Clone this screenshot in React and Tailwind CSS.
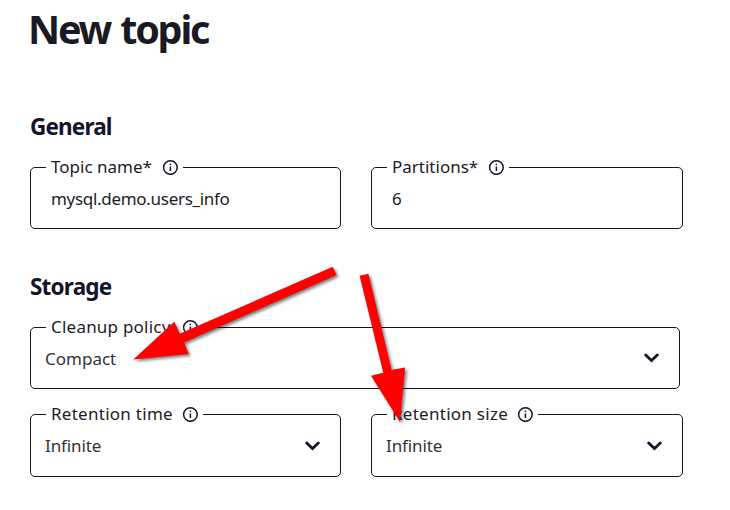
const INK = '#14142b';

function InfoIcon() {
  return (
    <svg className="block h-4 w-4 shrink-0" viewBox="0 0 16 16" fill="none">
      <circle cx="8.4" cy="8.5" r="6.8" stroke={INK} strokeWidth="1.5" />
      <path d="M8.4 7.5V12" stroke={INK} strokeWidth="1.5" />
      <path d="M8.4 4.6V6.2" stroke={INK} strokeWidth="1.5" />
    </svg>
  );
}

function Chevron() {
  return (
    <svg className="block h-[10px] w-4 shrink-0" viewBox="0 0 16 10" fill="none">
      <path d="M1.700 2L7.500 7.600L13.300 2" stroke={INK} strokeWidth="2.8" strokeLinecap="round" strokeLinejoin="miter" />
    </svg>
  );
}

function Field({ label, labelClass, value, valueClass, boxClass, select = false }) {
  return (
    <div className={`relative flex items-center rounded-[5px] border border-[#14142b] ${boxClass}`}>
      <div className="absolute -top-[13px] left-[15px] flex h-6 items-center bg-white pl-[5px] pr-[5px]">
        <span className={`block whitespace-nowrap text-[17px] leading-6 text-[#1c1c26] ${labelClass}`}>{label}</span>
        <InfoIcon />
      </div>
      <span className={`block flex-1 whitespace-nowrap text-[17px] leading-6 ${valueClass}`}>{value}</span>
      {select && <Chevron />}
    </div>
  );
}

export default function App() {
  return (
    <main className="relative h-[510px] w-[730px] overflow-hidden bg-white pl-[30px] font-['Noto_Sans','Open_Sans',sans-serif]">
      <h1 className="-ml-[2px] h-[58px] whitespace-nowrap text-[39.5px] leading-[58px] font-bold tracking-[-2.2px] text-[#1a1a24] [word-spacing:2px]">New topic</h1>

      <section className="mt-[55px]">
        <h2 className="h-7 text-[22.5px] leading-7 font-bold tracking-[-0.85px] text-[#14142b]">General</h2>
        <div className="mt-[26px] flex gap-[30px]">
          <Field label="Topic name*" labelClass="w-[111px]" value="mysql.demo.users_info" valueClass="pt-0.5 tracking-[-0.3px] text-[#1c1c26]" boxClass="h-[62px] w-[311px] pl-5" />
          <Field label="Partitions*" labelClass="w-[96px]" value="6" valueClass="pt-0.5 text-[#1c1c26]" boxClass="h-[62px] w-[312px] pl-5" />
        </div>
      </section>

      <section className="mt-[44px]">
        <h2 className="h-7 text-[22.5px] leading-7 font-bold tracking-[-0.8px] text-[#14142b]">Storage</h2>
        <div className="mt-[26px]">
          <Field select label="Cleanup policy" labelClass="w-[131px] tracking-[0.22px]" value="Compact" valueClass="pt-0.5 text-[#333333]" boxClass="h-[62px] w-[650px] pl-[14px] pr-[19px]" />
        </div>
        <div className="mt-[25px] flex gap-[30px]">
          <Field select label="Retention time" labelClass="w-[131px] tracking-[0.27px]" value="Infinite" valueClass="tracking-[-0.1px] text-[#333333]" boxClass="h-[63px] w-[311px] pl-[14px] pr-[19px]" />
          <Field select label="Retention size" labelClass="w-[125px] tracking-[0.27px]" value="Infinite" valueClass="tracking-[-0.1px] text-[#333333]" boxClass="h-[63px] w-[312px] pl-[14px] pr-[19px]" />
        </div>
      </section>

      <svg className="pointer-events-none absolute inset-0 h-[510px] w-[730px]" viewBox="0 0 730 510">
        <g fill="#ff0000" className="drop-shadow-[2px_2px_1.5px_rgba(0,0,0,0.5)]">
          <path d="M332.700 266.800L336.500 275L184 342.500L188.700 354L133.300 359.500L174.300 321.800L179.700 333.800Z" />
          <path d="M359.600 275.800L368.400 273.800L391.600 370L405 367.500L400 422L371 375.700L383.300 372.700Z" />
        </g>
      </svg>
    </main>
  );
}
